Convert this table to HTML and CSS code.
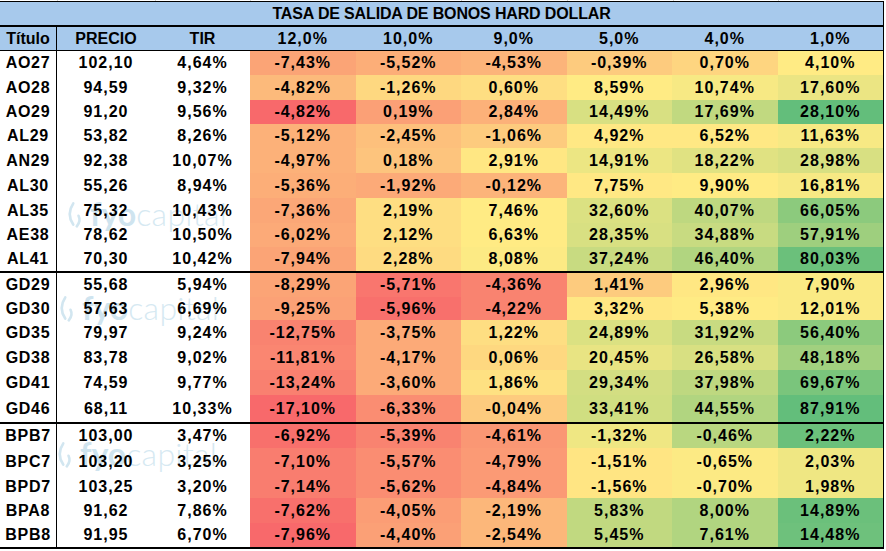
FILE: index.html
```html
<!DOCTYPE html>
<html lang="es">
<head>
<meta charset="utf-8">
<title>Tasa de salida de bonos hard dollar</title>
<link rel="stylesheet" href="styles.css">
</head>
<body>
<div class="page">
  <div class="gridstrip"><span></span><span></span><span></span><span></span><span></span><span></span><span></span><span></span><span></span></div>
  <div class="sheet">
    <div class="wm wm1"><svg class="wm-logo" viewBox="0 0 24 34"><path d="M10 5 Q2 17 10 29"/><path d="M16 19 Q19 25 14 31"/></svg><span class="wm-fyo">fyo</span><span class="wm-cap">capital</span></div>
    <div class="wm wm2"><svg class="wm-logo" viewBox="0 0 24 34"><path d="M10 5 Q2 17 10 29"/><path d="M16 19 Q19 25 14 31"/></svg><span class="wm-fyo">fyo</span><span class="wm-cap">capital</span></div>
    <div class="wm wm3"><svg class="wm-logo" viewBox="0 0 24 34"><path d="M10 5 Q2 17 10 29"/><path d="M16 19 Q19 25 14 31"/></svg><span class="wm-fyo">fyo</span><span class="wm-cap">capital</span></div>

    <div class="title">TASA DE SALIDA DE BONOS HARD DOLLAR</div>
    <div class="row head">
      <div class="c code plain">Título</div><div class="c plain">PRECIO</div><div class="c plain">TIR</div>
      <div class="c">12,0%</div><div class="c">10,0%</div><div class="c">9,0%</div><div class="c">5,0%</div><div class="c">4,0%</div><div class="c">1,0%</div>
    </div>

    <div class="group">
      <div class="row"><div class="c code">AO27</div><div class="c">102,10</div><div class="c">4,64%</div>
        <div class="c" style="background:#FBA476">-7,43%</div><div class="c" style="background:#FCAE78">-5,52%</div><div class="c" style="background:#FCB47A">-4,53%</div><div class="c" style="background:#FDCB7E">-0,39%</div><div class="c" style="background:#FED580">0,70%</div><div class="c" style="background:#FFEB84">4,10%</div></div>
      <div class="row h25"><div class="c code">AO28</div><div class="c">94,59</div><div class="c">9,32%</div>
        <div class="c" style="background:#FCBA7B">-4,82%</div><div class="c" style="background:#FED880">-1,26%</div><div class="c" style="background:#FEDE82">0,60%</div><div class="c" style="background:#FFEB84">8,59%</div><div class="c" style="background:#F7E984">10,74%</div><div class="c" style="background:#EBE583">17,60%</div></div>
      <div class="row"><div class="c code">AO29</div><div class="c">91,20</div><div class="c">9,56%</div>
        <div class="c" style="background:#F8696B">-4,82%</div><div class="c" style="background:#FBA076">0,19%</div><div class="c" style="background:#FCB179">2,84%</div><div class="c" style="background:#D8E082">14,49%</div><div class="c" style="background:#C1D980">17,69%</div><div class="c" style="background:#63BE7B">28,10%</div></div>
      <div class="row"><div class="c code">AL29</div><div class="c">53,82</div><div class="c">8,26%</div>
        <div class="c" style="background:#FCB179">-5,12%</div><div class="c" style="background:#FDC07C">-2,45%</div><div class="c" style="background:#FDCB7E">-1,06%</div><div class="c" style="background:#FFE884">4,92%</div><div class="c" style="background:#FFE884">6,52%</div><div class="c" style="background:#F7E984">11,63%</div></div>
      <div class="row h25"><div class="c code">AN29</div><div class="c">92,38</div><div class="c">10,07%</div>
        <div class="c" style="background:#FCB179">-4,97%</div><div class="c" style="background:#FDC47D">0,18%</div><div class="c" style="background:#FFE783">2,91%</div><div class="c" style="background:#ECE683">14,91%</div><div class="c" style="background:#E0E282">18,22%</div><div class="c" style="background:#D8E082">28,98%</div></div>
      <div class="row h25"><div class="c code">AL30</div><div class="c">55,26</div><div class="c">8,94%</div>
        <div class="c" style="background:#FCAE78">-5,36%</div><div class="c" style="background:#FCAA78">-1,92%</div><div class="c" style="background:#FCB47A">-0,12%</div><div class="c" style="background:#FFE884">7,75%</div><div class="c" style="background:#FFEB84">9,90%</div><div class="c" style="background:#F7E984">16,81%</div></div>
      <div class="row h25"><div class="c code">AL35</div><div class="c">75,32</div><div class="c">10,43%</div>
        <div class="c" style="background:#FBA777">-7,36%</div><div class="c" style="background:#FEDE82">2,19%</div><div class="c" style="background:#FFEB84">7,46%</div><div class="c" style="background:#DBE182">32,60%</div><div class="c" style="background:#BED880">40,07%</div><div class="c" style="background:#8CCA7D">66,05%</div></div>
      <div class="row"><div class="c code">AE38</div><div class="c">78,62</div><div class="c">10,50%</div>
        <div class="c" style="background:#FCAA78">-6,02%</div><div class="c" style="background:#FEDE82">2,12%</div><div class="c" style="background:#FFEB84">6,63%</div><div class="c" style="background:#D8E082">28,35%</div><div class="c" style="background:#C8DB81">34,88%</div><div class="c" style="background:#9ECF7E">57,91%</div></div>
      <div class="row"><div class="c code">AL41</div><div class="c">70,30</div><div class="c">10,42%</div>
        <div class="c" style="background:#FBA476">-7,94%</div><div class="c" style="background:#FEDB81">2,28%</div><div class="c" style="background:#FCEA84">8,08%</div><div class="c" style="background:#C8DB81">37,24%</div><div class="c" style="background:#B1D580">46,40%</div><div class="c" style="background:#6BC07B">80,03%</div></div>
    </div>

    <div class="group">
      <div class="row"><div class="c code">GD29</div><div class="c">55,68</div><div class="c">5,94%</div>
        <div class="c" style="background:#FBA476">-8,29%</div><div class="c" style="background:#F9766E">-5,71%</div><div class="c" style="background:#F98370">-4,36%</div><div class="c" style="background:#FDCB7E">1,41%</div><div class="c" style="background:#FFE783">2,96%</div><div class="c" style="background:#FAEA84">7,90%</div></div>
      <div class="row h23"><div class="c code">GD30</div><div class="c">57,63</div><div class="c">6,69%</div>
        <div class="c" style="background:#FBA176">-9,25%</div><div class="c" style="background:#F8706C">-5,96%</div><div class="c" style="background:#F98370">-4,22%</div><div class="c" style="background:#FFE783">3,32%</div><div class="c" style="background:#FFEB84">5,38%</div><div class="c" style="background:#FAEA84">12,01%</div></div>
      <div class="row h25"><div class="c code">GD35</div><div class="c">79,97</div><div class="c">9,24%</div>
        <div class="c" style="background:#F98370">-12,75%</div><div class="c" style="background:#FCAA78">-3,75%</div><div class="c" style="background:#FEDE82">1,22%</div><div class="c" style="background:#DBE182">24,89%</div><div class="c" style="background:#C8DB81">31,92%</div><div class="c" style="background:#8CCA7D">56,40%</div></div>
      <div class="row h25"><div class="c code">GD38</div><div class="c">83,78</div><div class="c">9,02%</div>
        <div class="c" style="background:#FA8671">-11,81%</div><div class="c" style="background:#FCAA78">-4,17%</div><div class="c" style="background:#FED880">0,06%</div><div class="c" style="background:#E8E483">20,45%</div><div class="c" style="background:#D8E082">26,58%</div><div class="c" style="background:#A1D07F">48,18%</div></div>
      <div class="row h25"><div class="c code">GD41</div><div class="c">74,59</div><div class="c">9,77%</div>
        <div class="c" style="background:#F98070">-13,24%</div><div class="c" style="background:#FCAA78">-3,60%</div><div class="c" style="background:#FEE182">1,86%</div><div class="c" style="background:#D3DE82">29,34%</div><div class="c" style="background:#BED880">37,98%</div><div class="c" style="background:#7AC57C">69,67%</div></div>
      <div class="row h27"><div class="c code">GD46</div><div class="c">68,11</div><div class="c">10,33%</div>
        <div class="c" style="background:#F8696B">-17,10%</div><div class="c" style="background:#FA8D72">-6,33%</div><div class="c" style="background:#FDCB7E">-0,04%</div><div class="c" style="background:#D0DE81">33,41%</div><div class="c" style="background:#B1D580">44,55%</div><div class="c" style="background:#63BE7B">87,91%</div></div>
    </div>

    <div class="group">
      <div class="row"><div class="c code">BPB7</div><div class="c">103,00</div><div class="c">3,47%</div>
        <div class="c" style="background:#F8706C">-6,92%</div><div class="c" style="background:#F98370">-5,39%</div><div class="c" style="background:#FA9774">-4,61%</div><div class="c" style="background:#EFE783">-1,32%</div><div class="c" style="background:#B9D780">-0,46%</div><div class="c" style="background:#6BC07B">2,22%</div></div>
      <div class="row h27"><div class="c code">BPC7</div><div class="c">103,20</div><div class="c">3,25%</div>
        <div class="c" style="background:#F97D6F">-7,10%</div><div class="c" style="background:#FA8D72">-5,57%</div><div class="c" style="background:#FB9A75">-4,79%</div><div class="c" style="background:#FFE583">-1,51%</div><div class="c" style="background:#FCEA84">-0,65%</div><div class="c" style="background:#EFE783">2,03%</div></div>
      <div class="row h23"><div class="c code">BPD7</div><div class="c">103,25</div><div class="c">3,20%</div>
        <div class="c" style="background:#F97D6F">-7,14%</div><div class="c" style="background:#FA8D72">-5,62%</div><div class="c" style="background:#FB9A75">-4,84%</div><div class="c" style="background:#FFE583">-1,56%</div><div class="c" style="background:#FCEA84">-0,70%</div><div class="c" style="background:#EFE783">1,98%</div></div>
      <div class="row h25"><div class="c code">BPA8</div><div class="c">91,62</div><div class="c">7,86%</div>
        <div class="c" style="background:#F8706C">-7,62%</div><div class="c" style="background:#FB9D75">-4,05%</div><div class="c" style="background:#FCB77A">-2,19%</div><div class="c" style="background:#C1D980">5,83%</div><div class="c" style="background:#B1D580">8,00%</div><div class="c" style="background:#6BC07B">14,89%</div></div>
      <div class="row"><div class="c code">BPB8</div><div class="c">91,95</div><div class="c">6,70%</div>
        <div class="c" style="background:#F8696B">-7,96%</div><div class="c" style="background:#FBA076">-4,40%</div><div class="c" style="background:#FCB77A">-2,54%</div><div class="c" style="background:#C1D980">5,45%</div><div class="c" style="background:#B1D580">7,61%</div><div class="c" style="background:#6EC17C">14,48%</div></div>
    </div>
  </div>
</div>
</body>
</html>
```

FILE: styles.css
```css
html, body {
  margin: 0;
  padding: 0;
  background: #ffffff;
}

body {
  font-family: "Liberation Sans", Arial, sans-serif;
  font-weight: bold;
  font-size: 16px;
  color: #000000;
}

.page {
  width: 884px;
}

.gridstrip {
  display: grid;
  grid-template-columns: 57px 98px 95px repeat(6, 1fr);
  height: 1px;
}

.gridstrip span {
  border-left: 1px solid #d4d4d4;
}

.gridstrip span:first-child {
  border-left: none;
}

.sheet {
  position: relative;
  z-index: 0;
  border-right: 1px solid #000;
}

.title {
  height: 23px;
  border-top: 1px solid #000;
  border-bottom: 2px solid #000;
  background: #a7c9ec;
  display: flex;
  align-items: center;
  justify-content: center;
  letter-spacing: -0.15px;
}

.row {
  display: grid;
  grid-template-columns: 57px 98px 95px repeat(6, 1fr);
  height: 24px;
}

.row.h23 { height: 23px; }
.row.h25 { height: 25px; }
.row.h27 { height: 27px; }

.row.head {
  height: 23px;
  background: #a7c9ec;
  border-bottom: 1px solid #000;
}

.group {
  border-bottom: 2px solid #000;
}

.c {
  display: flex;
  align-items: center;
  justify-content: center;
  letter-spacing: 1px;
  white-space: nowrap;
}

.c.code {
  border-right: 1px solid #000;
  letter-spacing: 0.7px;
}

.c.plain {
  letter-spacing: 0;
}

/* faint watermark behind the table */
.wm {
  position: absolute;
  z-index: -1;
  display: flex;
  align-items: baseline;
  font-family: Lato, "Open Sans", sans-serif;
  font-size: 32px;
  line-height: 40px;
  white-space: nowrap;
}

.wm1 { left: 64px; top: 193px; }
.wm2 { left: 56px; top: 287px; }
.wm3 { left: 54px; top: 433px; }

.wm-logo {
  width: 22px;
  height: 30px;
  margin-right: 4px;
  align-self: center;
  fill: none;
  stroke: #d2e6f0;
  stroke-width: 3;
  stroke-linecap: round;
}

.wm-fyo {
  font-weight: 700;
  color: #cfe4ef;
}

.wm-cap {
  font-weight: 300;
  color: #d6e9f2;
  letter-spacing: 0.3px;
}
```
